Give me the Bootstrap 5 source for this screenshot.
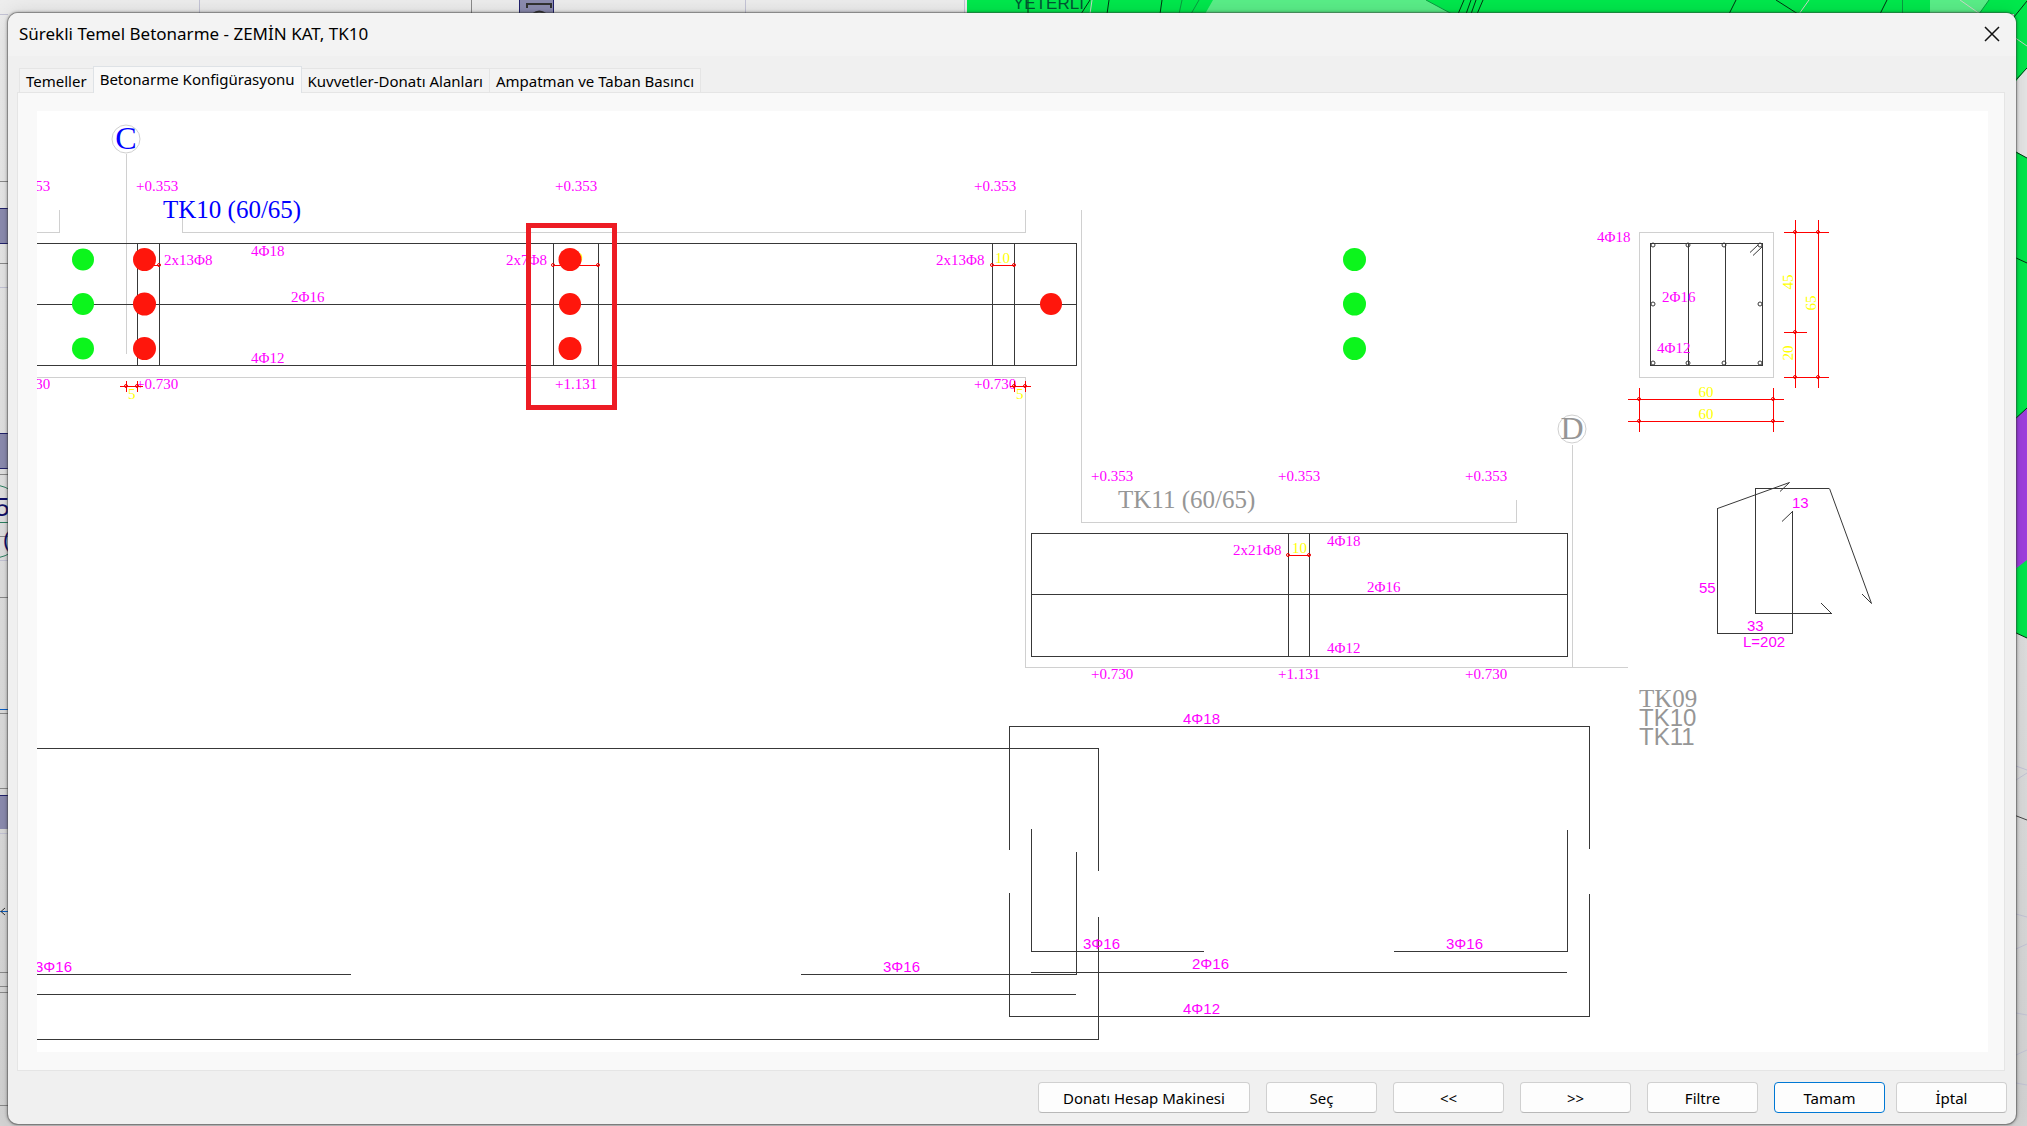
<!DOCTYPE html>
<html lang="tr">
<head>
<meta charset="utf-8">
<meta name="viewport" content="width=device-width, initial-scale=1">
<title>Sürekli Temel Betonarme - ZEMİN KAT, TK10</title>
<link href="https://cdn.jsdelivr.net/npm/bootstrap@5.3.0/dist/css/bootstrap.min.css" rel="stylesheet">
<style>
  body { font-family: "Noto Sans", "Open Sans", sans-serif; font-size: 15px; color: #000; background: linear-gradient(#ededed, #d4d4d4); padding: 13px 11px 2px 8px; overflow-x: hidden; }
  .backdrop-plan { z-index: -1; }
  .dlg { background: #f0f0f0; border-radius: 10px; box-shadow: 0 0 0 1px rgba(70,70,70,.35), 0 0 3px 1px rgba(0,0,0,.35), 0 0 20px rgba(0,0,0,.12); }
  .dlg-head { height: 43px; background: #f3f3f3; border-radius: 10px 10px 0 0; padding: 0 16px 2px 11px; }
  .dlg-title { font-size: 17px; line-height: 24px; }
  .dlg-close { color: #000; line-height: 0; }
  .cfg-tabs { padding: 10px 0 0 12px; border: 0; }
  .cfg-tabs .nav-link { color: #000; background: #f3f3f3; border: 1px solid #e5e5e5; border-bottom: 0; border-radius: 0; padding: 0 6px; margin: 0 0 0 -1px; height: 24px; line-height: 24px; white-space: nowrap; }
  .cfg-tabs .nav-link.active { background: #f9f9f9; color: #000; height: 27px; margin-bottom: -1px; position: relative; }
  .cfg-panel { background: #f9f9f9; border: 1px solid #e5e5e5; margin: 0 11px 0 9px; padding: 18px 16px 18px 19px; }
  .drawing { background: #fff; display: block; width: 100%; height: auto; }
  .dlg-foot { padding: 11px 9px 11px 9px; gap: 16px; }
  .dlg-btn { background: #fdfdfd; border: 1px solid #d0d0d0; border-bottom-color: #b8b8b8; border-radius: 4px; color: #000; font-size: 15px; line-height: 21px; height: 31px; min-width: 111px; padding: 5px 8px 3px; }
  .dlg-btn.wide { width: 212px; }
  .dlg-btn.default { border-color: #0078d4; }
  .end-pair { gap: 11px; }

  .serif { font-family: "Liberation Serif", serif; font-size: 15px; }
  .sans { font-family: "Liberation Sans", sans-serif; font-size: 15px; }
  .name-serif { font-family: "Liberation Serif", serif; font-size: 25px; }
  .name-sans { font-family: "Liberation Sans", sans-serif; font-size: 24px; }
  .axis-name { font-family: "Liberation Serif", serif; font-size: 32px; text-anchor: middle; }
  .mag { fill: #f0f; } .yel { fill: #ff0; } .blu { fill: #00f; } .gry { fill: #969696; }
  .mid { text-anchor: middle; }
  .ln { fill: none; stroke: #383838; shape-rendering: crispEdges; }
  .sl { fill: none; stroke: #383838; }
  .lg { fill: none; stroke: #d0d0d0; shape-rendering: crispEdges; }
  .rd { fill: none; stroke: #f00; shape-rendering: crispEdges; }
  .knot { fill: none; stroke: #e00; }
</style>
<script src="https://cdn.jsdelivr.net/npm/bootstrap@5.3.0/dist/js/bootstrap.bundle.min.js"></script>
</head>
<body class="min-vh-100 d-flex position-relative">

<!-- plan drawing that stays visible around the dialog -->
<svg class="backdrop-plan position-absolute top-0 start-0 w-100 h-100" viewBox="0 0 2027 1126" preserveAspectRatio="none" aria-hidden="true">
  <g fill="none" stroke="#c4c4d6">
    <path d="M0 14.5H8M199.500 0V14M745.500 0V14M964.500 0V14M0 287.500H8M0 560.500H8M0 833.500H8"/>
    <path d="M2016 766L2027 770M2016 780L2027 773M2016 914L2027 917M2016 949L2027 944M2016 1013L2027 1015M2016 1055L2027 1050M2016 1083L2027 1085"/>
  </g>
  <path d="M471.500 0V14M0 181.500H8M0 263.500H8M0 474.500H8M0 536.500H8M0 597.500H8M0 713.500H8M0 788.500H8M0 972.500H8M0 986.500H8M0 992.500H8M0 1105.500H8" fill="none" stroke="#8a8a8a"/>
  <path d="M519 0H553V14H519ZM0 208H8V243H0ZM0 433H8V468H0ZM0 795H8V829H0Z" fill="#8c8cb0"/>
  <path d="M519.500 0V14M553.500 0V14M0 208.500H8M0 243.500H8M0 433.500H8M0 468.500H8M0 795.500H8" fill="none" stroke="#22226c"/>
  <path d="M527 8V4H551V8M533 14Q539 9 546 14" fill="none" stroke="#333" stroke-width="2"/>
  <circle cx="-9" cy="521.500" r="37" fill="none" stroke="#2a8060"/>
  <path d="M0 522.500H8" stroke="#2a8060"/>
  <path d="M0 709.500H8M0 911.500H8" stroke="#0a60c8"/>
  <path d="M5 908L1 911.500L5 915" fill="none" stroke="#333"/>
  <text x="-5" y="516" font-size="26" font-family="Liberation Sans, sans-serif" fill="#10106a">5</text>
  <text x="3" y="547" font-size="22" font-family="Liberation Sans, sans-serif" fill="#10106a">(</text>
  <path d="M967 0H2027V68L2014 84V150L2027 158V638L2014 632V14H967Z" fill="#00e84c"/>
  <path d="M2014 84L2027 68V158L2014 150Z" fill="#e6e6e6"/>
  <path d="M2014 420L2027 408V560L2014 570Z" fill="#a040e0"/>
  <path d="M1213 0H1426L1452 14H1205ZM1930 0H1989L1979 14H1930Z" fill="#5aee88"/>
  <path d="M1090 0L1081 14M1109 0L1107 14M1162 0L1160 14M1464 0L1458 14M1471 0L1466 14M1476 0L1471 14M1483 0L1477 14M1736 0L1729 14M1776 0L1798 14M1887 0L1880 14M2027 1L2014 17M2014 82L2027 68M2014 151L2027 158M2014 257L2027 263M2014 420L2027 408M2014 632L2027 638M1028 0V14" fill="none" stroke="#031"/>
  <path d="M2014 815L2027 820" stroke="#444"/>
  <path d="M1182 0L1179 14M1199 0L1191 14M1902.500 0V14M1989 0L1979 14M1426 0L1452 14" fill="none" stroke="#0a9a40"/>
  <path d="M1092 0L1090 14M1809 0L1799 14M1960 0L1980 14M2014 37L2027 46" fill="none" stroke="#c8d8c8"/>
  <text x="1013" y="9" font-size="17" font-family="Liberation Sans, sans-serif" fill="#053">YETERLİ</text>
</svg>

<main class="dlg flex-grow-1 d-flex flex-column" role="dialog" aria-labelledby="dlgTitle">
  <header class="dlg-head d-flex align-items-center justify-content-between">
    <h1 class="dlg-title fw-normal mb-0" id="dlgTitle">Sürekli Temel Betonarme - ZEMİN KAT, TK10</h1>
    <button type="button" class="dlg-close btn p-0 border-0" aria-label="Kapat">
      <svg width="16" height="16" viewBox="0 0 16 16" fill="none" stroke="#111" stroke-width="1.500"><path d="M1 1L15 15M15 1L1 15"/></svg>
    </button>
  </header>

  <ul class="cfg-tabs nav nav-tabs align-items-end" role="tablist">
    <li class="nav-item"><a class="nav-link" href="#temeller" role="tab">Temeller</a></li>
    <li class="nav-item"><a class="nav-link active" href="#konfig" role="tab" aria-selected="true">Betonarme Konfigürasyonu</a></li>
    <li class="nav-item"><a class="nav-link" href="#kuvvet" role="tab">Kuvvetler-Donatı Alanları</a></li>
    <li class="nav-item"><a class="nav-link" href="#ampatman" role="tab">Ampatman ve Taban Basıncı</a></li>
  </ul>

  <section class="cfg-panel" id="konfig" role="tabpanel">
    <svg class="drawing" viewBox="37 111 1951 941" role="img" aria-label="Temel donatı çizimi">
      <!-- concrete outlines and axes -->
      <path class="lg" d="M37 232.500H59.500V210M182.500 210V232.500H1025.500V210M37 377.500H1025.500V667.500H1628M1081.500 210V522.500H1516.500V500M126.500 154V354M1572.500 445V667M1639.500 232.500H1773.500V377.500H1639.500Z"/>
      <circle cx="126" cy="139" r="14" fill="none" stroke="#d0d0d0"/>
      <circle cx="1572" cy="429" r="14" fill="none" stroke="#d0d0d0"/>
      <text class="axis-name blu" x="126" y="149">C</text>
      <text class="axis-name gry" x="1572" y="439">D</text>

      <!-- beam elevations -->
      <path class="ln" d="M37 243.500H1076.500V365.500H37M37 304.500H1076M137.500 243V365M159.500 243V365M553.500 243V365M598.500 243V365M992.500 243V365M1014.500 243V365"/>
      <path class="ln" d="M1031.500 533.500H1567.500V656.500H1031.500ZM1031 594.500H1567M1288.500 533V656M1309.500 533V656"/>

      <!-- beam labels -->
      <g class="serif mag">
        <text x="8" y="191">+0.353</text><text x="136" y="191">+0.353</text><text x="555" y="191">+0.353</text><text x="974" y="191">+0.353</text>
        <text x="8" y="389">+0.730</text><text x="136" y="389">+0.730</text><text x="555" y="389">+1.131</text><text x="974" y="389">+0.730</text>
        <text x="251" y="256">4Φ18</text><text x="291" y="302">2Φ16</text><text x="251" y="363">4Φ12</text>
        <text x="164" y="265">2x13Φ8</text><text x="506" y="265">2x7Φ8</text><text x="936" y="265">2x13Φ8</text>
        <text x="1091" y="481">+0.353</text><text x="1278" y="481">+0.353</text><text x="1465" y="481">+0.353</text>
        <text x="1091" y="679">+0.730</text><text x="1278" y="679">+1.131</text><text x="1465" y="679">+0.730</text>
        <text x="1233" y="555">2x21Φ8</text><text x="1327" y="546">4Φ18</text><text x="1367" y="592">2Φ16</text><text x="1327" y="653">4Φ12</text>
      </g>
      <text class="name-serif blu" x="163" y="218">TK10 (60/65)</text>
      <text class="name-serif gry" x="1118" y="508">TK11 (60/65)</text>

      <!-- stirrup spacing and cover dimensions -->
      <g class="serif yel">
        <text x="568" y="263">20</text><text x="995" y="263">10</text><text x="1292" y="553">10</text>
        <text x="128" y="399">5</text><text x="1016" y="399">5</text>
      </g>
      <path class="rd" d="M145 265.500H159M553 265.500H599M992 265.500H1015M1288 555.500H1310M120 386.500H143M126.500 381V392M137.500 381V392M1010 386.500H1031M1014.500 381V392M1025.500 381V392"/>
      <g class="knot">
        <circle cx="159" cy="265" r="1.500"/><circle cx="553" cy="265" r="1.500"/><circle cx="598" cy="265" r="1.500"/><circle cx="992" cy="265" r="1.500"/><circle cx="1014" cy="265" r="1.500"/>
        <circle cx="1288" cy="555" r="1.500"/><circle cx="1309" cy="555" r="1.500"/><circle cx="126" cy="386" r="1.500"/><circle cx="137" cy="386" r="1.500"/><circle cx="1014" cy="386" r="1.500"/><circle cx="1025" cy="386" r="1.500"/>
      </g>

      <!-- status dots -->
      <g fill="#0cf51c">
        <circle cx="83" cy="259.500" r="11"/><circle cx="83" cy="304" r="11"/><circle cx="83" cy="348.500" r="11"/>
        <circle cx="1354.500" cy="259.500" r="11.500"/><circle cx="1354.500" cy="304" r="11.500"/><circle cx="1354.500" cy="348.500" r="11.500"/>
      </g>
      <g fill="#ff160c">
        <circle cx="144.500" cy="259.500" r="11.500"/><circle cx="144.500" cy="304" r="11.500"/><circle cx="144.500" cy="348.500" r="11.500"/>
        <circle cx="570" cy="259.500" r="11.500"/><circle cx="570" cy="304" r="11"/><circle cx="570" cy="348.500" r="11.500"/>
        <circle cx="1051" cy="304" r="11"/>
      </g>
      <rect x="528.500" y="225.500" width="86" height="182" fill="none" stroke="#ed1c24" stroke-width="5"/>

      <!-- cross section -->
      <path class="ln" d="M1650.500 243.500H1762.500V365.500H1650.500ZM1688.500 243V365M1725.500 243V365"/>
      <path class="sl" d="M1750 252.500L1758 245M1753 255.500L1762 247"/>
      <g class="sl">
        <circle cx="1653" cy="245" r="2"/><circle cx="1688" cy="245" r="2"/><circle cx="1724" cy="245" r="2"/><circle cx="1760" cy="245" r="2"/>
        <circle cx="1653" cy="304" r="2"/><circle cx="1760" cy="304" r="2"/>
        <circle cx="1653" cy="363" r="2"/><circle cx="1688" cy="363" r="2"/><circle cx="1724" cy="363" r="2"/><circle cx="1760" cy="363" r="2"/>
      </g>
      <g class="serif mag"><text x="1597" y="242">4Φ18</text><text x="1662" y="302">2Φ16</text><text x="1657" y="353">4Φ12</text></g>
      <path class="rd" d="M1795.500 220V388M1818.500 220V388M1784 232.500H1829M1784 332.500H1807M1784 377.500H1829M1639.500 388V432M1773.500 388V432M1628 399.500H1784M1628 421.500H1784"/>
      <g class="knot">
        <circle cx="1795" cy="232" r="1.500"/><circle cx="1818" cy="232" r="1.500"/><circle cx="1795" cy="332" r="1.500"/><circle cx="1795" cy="377" r="1.500"/><circle cx="1818" cy="377" r="1.500"/>
        <circle cx="1639" cy="399" r="1.500"/><circle cx="1773" cy="399" r="1.500"/><circle cx="1639" cy="421" r="1.500"/><circle cx="1773" cy="421" r="1.500"/>
      </g>
      <g class="serif yel mid">
        <text transform="translate(1793 282) rotate(-90)">45</text>
        <text transform="translate(1816 303) rotate(-90)">65</text>
        <text transform="translate(1793 353) rotate(-90)">20</text>
        <text x="1706" y="397">60</text><text x="1706" y="419">60</text>
      </g>

      <!-- stirrup shape -->
      <path class="ln" d="M1717.500 508V633.500H1792.500V511M1829 488.500H1755.500V613.500H1832"/>
      <path class="sl" d="M1717.500 508.500L1789.500 482.500L1780 491.500M1792.500 511.500L1782 521.500M1829.500 488.500L1871.500 603.500L1862 594M1831.500 613.500L1821 603"/>
      <g class="sans mag"><text x="1792" y="508">13</text><text x="1699" y="593">55</text><text x="1747" y="631">33</text><text x="1743" y="647">L=202</text></g>

      <!-- beam list -->
      <text class="name-serif gry" x="1639" y="707">TK09</text>
      <text class="name-sans gry" x="1639" y="726">TK10</text>
      <text class="name-sans gry" x="1639" y="745">TK11</text>

      <!-- bar schedule -->
      <path class="ln" d="M37 748.500H1098.500V871M1098.500 917V1039.500H37M37 974.500H351M801 974.500H1076.500V852M37 994.500H1076"/>
      <path class="ln" d="M1009.500 850V726.500H1589.500V849M1009.500 893V1016.500H1589.500V894M1031.500 829V951.500H1204M1394 951.500H1567.500V830M1031 972.500H1567"/>
      <g class="sans mag">
        <text x="35" y="972">3Φ16</text><text x="883" y="972">3Φ16</text><text x="1083" y="949">3Φ16</text><text x="1446" y="949">3Φ16</text>
        <text x="1183" y="724">4Φ18</text><text x="1192" y="969">2Φ16</text><text x="1183" y="1014">4Φ12</text>
      </g>
    </svg>
  </section>

  <footer class="dlg-foot d-flex flex-wrap justify-content-end">
    <button type="button" class="dlg-btn wide btn">Donatı Hesap Makinesi</button>
    <button type="button" class="dlg-btn btn">Seç</button>
    <button type="button" class="dlg-btn btn">&lt;&lt;</button>
    <button type="button" class="dlg-btn btn">&gt;&gt;</button>
    <button type="button" class="dlg-btn btn">Filtre</button>
    <div class="end-pair d-flex">
      <button type="button" class="dlg-btn default btn">Tamam</button>
      <button type="button" class="dlg-btn btn">İptal</button>
    </div>
  </footer>
</main>
</body>
</html>
